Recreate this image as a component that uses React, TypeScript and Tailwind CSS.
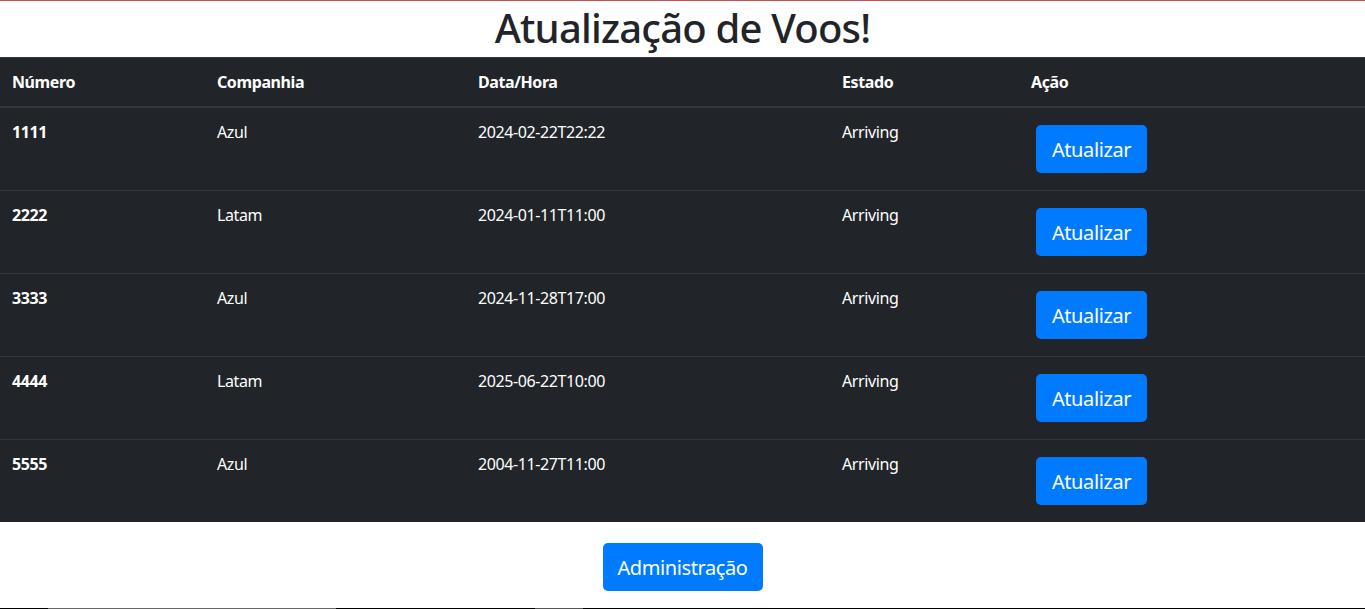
import React from "react";

const flights = [
  { n: "1111", c: "Azul", d: "2024-02-22T22:22", e: "Arriving" },
  { n: "2222", c: "Latam", d: "2024-01-11T11:00", e: "Arriving" },
  { n: "3333", c: "Azul", d: "2024-11-28T17:00", e: "Arriving" },
  { n: "4444", c: "Latam", d: "2025-06-22T10:00", e: "Arriving" },
  { n: "5555", c: "Azul", d: "2004-11-27T11:00", e: "Arriving" },
];

export default function App() {
  return (
    <div
      className="w-[1365px] h-[609px] flex flex-col bg-white border-t border-[#c94f4f] text-[#212529] tracking-[-0.4px]"
      style={{ fontFamily: '"Noto Sans", "Open Sans", sans-serif' }}
    >
      <h1 className="h-[56px] text-[40px] leading-[54px] font-medium text-center tracking-[-0.8px]">
        Atualização de Voos!
      </h1>
      <table className="w-full table-fixed border-collapse bg-[#212529] text-white text-[16px] leading-6">
        <colgroup>
          <col className="w-[205px]" />
          <col className="w-[261px]" />
          <col className="w-[364px]" />
          <col className="w-[189px]" />
          <col />
        </colgroup>
        <thead>
          <tr className="border-t border-[#32383e]">
            {["Número", "Companhia", "Data/Hora", "Estado", "Ação"].map((h) => (
              <th
                key={h}
                className="text-left font-bold p-3 align-bottom border-b-2 border-[#32383e]"
              >
                {h}
              </th>
            ))}
          </tr>
        </thead>
        <tbody>
          {flights.map((f, i) => (
            <tr key={f.n} className={i > 0 ? "border-t border-[#32383e]" : ""}>
              <th className="text-left font-bold p-3 align-top">{f.n}</th>
              <td className="p-3 align-top">{f.c}</td>
              <td className="p-3 align-top">{f.d}</td>
              <td className="p-3 align-top">{f.e}</td>
              <td className="p-3 align-top">
                <button className="m-[5px] h-[48px] w-[111px] pt-[2px] rounded-[5px] bg-[#007bff] text-white text-[20px] leading-[30px]">
                  Atualizar
                </button>
              </td>
            </tr>
          ))}
        </tbody>
      </table>
      <div className="flex justify-center pt-[21px] flex-1">
        <button className="h-[48px] w-[160px] pt-[2px] rounded-[5px] bg-[#007bff] text-white text-[20px] leading-[30px]">
          Administração
        </button>
      </div>
      <div className="h-px w-full bg-black flex">
        <div className="ml-[48px] w-[288px] bg-[#666]" />
        <div className="ml-[199px] w-[48px] bg-[#555]" />
      </div>
    </div>
  );
}
